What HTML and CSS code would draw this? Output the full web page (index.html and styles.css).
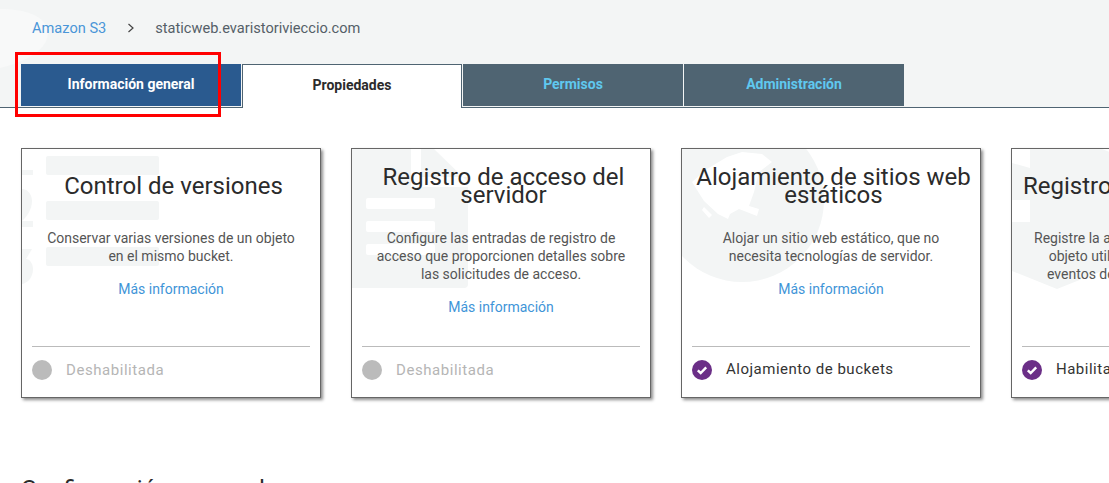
FILE: index.html
```html
<!DOCTYPE html>
<html lang="es">
<head>
  <meta charset="UTF-8" />
  <meta name="viewport" content="width=device-width, initial-scale=1.0" />
  <title>Amazon S3</title>
  <link rel="stylesheet" href="styles.css">
</head>
<body>
  <div class="page">

    <div class="top">
      <svg class="top-swoosh" width="60" height="107" viewBox="0 0 60 107">
        <path d="M0 9 C25 9 46 16 48 31 C49 50 25 62 0 68 Z" fill="#f8f9f9" />
      </svg>

      <div class="breadcrumb">
        <a href="#">Amazon S3</a>
        <svg class="crumb-arrow" width="8" height="10" viewBox="0 0 8 10">
          <path d="M1.5 1 L6 5 L1.5 9" fill="none" stroke="#444" stroke-width="1.2" />
        </svg>
        <span>staticweb.evaristorivieccio.com</span>
      </div>

      <div class="tabs">
        <a class="tab tab-active" href="#">Información general</a>
        <a class="tab tab-current" href="#">Propiedades</a>
        <a class="tab" href="#">Permisos</a>
        <a class="tab" href="#">Administración</a>
      </div>
    </div>

    <div class="red-mark"></div>

    <div class="cards">

      <div class="card">
        <svg class="card-bg" width="300" height="250" viewBox="0 0 300 250">
          <rect x="24" y="7" width="113" height="19" rx="2" />
          <rect x="24" y="52" width="113" height="19" rx="2" />
          <rect x="24" y="98" width="113" height="19" rx="2" />
          <path d="M0 21 H11 V26 H0 Z M0 40 C6 40 10 46 10 52 C10 60 5 68 0 72 H11 V78 H0 Z M0 100 H10 L4 110 C8 110 11 115 11 120 C11 128 6 134 0 135 Z" />
        </svg>
        <h3>Control de versiones</h3>
        <p>Conservar varias versiones de un objeto en el mismo bucket.</p>
        <a class="more" href="#">Más información</a>
        <div class="status status-off">
          <span class="dot"></span>
          <span>Deshabilitada</span>
        </div>
      </div>

      <div class="card">
        <svg class="card-bg" width="300" height="250" viewBox="0 0 300 250">
          <path d="M0 0 H59 V38 H116 V135 Q116 139 112 139 H0 Z" />
          <path d="M69 0 H82 L116 33 V28 H69 Z" />
          <rect x="14" y="49" width="69" height="11" rx="2" fill="#fff" />
          <rect x="14" y="72" width="69" height="11" rx="2" fill="#fff" />
          <rect x="14" y="95" width="69" height="11" rx="2" fill="#fff" />
        </svg>
        <h3>Registro de acceso del servidor</h3>
        <p>Configure las entradas de registro de acceso que proporcionen detalles sobre las solicitudes de acceso.</p>
        <a class="more" href="#">Más información</a>
        <div class="status status-off">
          <span class="dot"></span>
          <span>Deshabilitada</span>
        </div>
      </div>

      <div class="card">
        <svg class="card-bg" width="300" height="250" viewBox="0 0 300 250">
          <circle cx="60" cy="51" r="82" />
          <path d="M60 3 L80 5 L90 13 L77 23 L72 43 L67 57 L77 60 L75 67 L57 60 L48 65 L46 70 L36 65 L22 52 L10 33 L25 20 L45 8 Z M22 58 L30 66 L27 69 L20 61 Z" fill="#fff" />
        </svg>
        <h3>Alojamiento de sitios web estáticos</h3>
        <p>Alojar un sitio web estático, que no necesita tecnologías de servidor.</p>
        <a class="more" href="#">Más información</a>
        <div class="status">
          <svg class="check" width="20" height="20" viewBox="0 0 20 20">
            <circle cx="10" cy="10" r="10" fill="#6b2f87" />
            <path d="M5.8 10.3 L8.7 13 L14.2 7.4" fill="none" stroke="#fff" stroke-width="2.4" />
          </svg>
          <span class="status-text">Alojamiento de buckets</span>
        </div>
      </div>

      <div class="card">
        <svg class="card-bg" width="300" height="250" viewBox="0 0 300 250">
          <path d="M18 0 H90 L140 20 V102 L45 140 L0 122 V73 H18 V51 H0 V14 L18 19 Z" />
        </svg>
        <h3>Registro de nivel de objeto</h3>
        <p>Registre la actividad de la API de nivel de objeto utilizando la característica de eventos de datos de AWS CloudTrail.</p>
        <a class="more" href="#">Más información</a>
        <div class="status">
          <svg class="check" width="20" height="20" viewBox="0 0 20 20">
            <circle cx="10" cy="10" r="10" fill="#6b2f87" />
            <path d="M5.8 10.3 L8.7 13 L14.2 7.4" fill="none" stroke="#fff" stroke-width="2.4" />
          </svg>
          <span class="status-text">Habilitado</span>
        </div>
      </div>

    </div>

    <h2 class="section-title">Configuración avanzada</h2>
  </div>
</body>
</html>
```

FILE: styles.css
```css
* {
  margin: 0;
  padding: 0;
  box-sizing: border-box;
}

html, body {
  height: 100%;
  overflow: hidden;
}

body {
  background: #fff;
  font-family: Roboto, "Liberation Sans", sans-serif;
  color: #333;
}

a {
  text-decoration: none;
}

.page {
  position: relative;
  height: 483px;
  overflow: hidden;
}

.top {
  position: relative;
  height: 108px;
  padding: 20px 0 0 21px;
  background: #f3f5f5;
  border-bottom: 1px solid #4f6472;
}

.top-swoosh {
  position: absolute;
  top: 0;
  left: 0;
}

.breadcrumb {
  position: relative;
  display: flex;
  align-items: center;
  height: 16px;
  margin-left: 11px;
  font-size: 14.6px;
  color: #555f68;
}

.breadcrumb a {
  color: #4a96d8;
}

.crumb-arrow {
  margin: 0 20px 0 21px;
}

.tabs {
  position: relative;
  display: flex;
  gap: 1px;
  margin-top: 28px;
}

.tab {
  display: flex;
  align-items: center;
  justify-content: center;
  width: 220px;
  height: 42px;
  padding-bottom: 2px;
  background: #4f6472;
  color: #5fc8ef;
  font-size: 14px;
  font-weight: 700;
}

.tab-active {
  background: #2a5a8f;
  color: #fff;
}

.tab-current {
  height: 44px;
  padding-bottom: 3px;
  background: #fff;
  color: #2b2b2b;
  border: 1px solid #4f6472;
  border-bottom: none;
}

.red-mark {
  position: absolute;
  top: 52px;
  left: 15px;
  width: 206px;
  height: 65px;
  border: 3px solid #f00;
}

.cards {
  display: flex;
  gap: 30px;
  margin: 40px 0 0 21px;
}

.card {
  position: relative;
  display: flex;
  flex: none;
  flex-direction: column;
  align-items: center;
  width: 300px;
  height: 250px;
  padding: 19px 10px 0;
  background: #fff;
  border: 1px solid #666;
  box-shadow: 2px 2px 3px rgba(0, 0, 0, 0.45);
  text-align: center;
  overflow: hidden;
}

.card-bg {
  position: absolute;
  top: 0;
  left: 0;
  fill: #f3f5f5;
}

.card h3,
.card p,
.card .more {
  position: relative;
}

.card h3 {
  display: flex;
  flex: none;
  align-items: center;
  justify-content: center;
  width: 284px;
  height: 36px;
  margin-left: 5px;
  font-size: 24px;
  font-weight: 400;
  line-height: 18px;
  color: #2b2b2b;
}

.card p {
  width: 262px;
  margin-top: 25px;
  font-size: 14px;
  line-height: 18px;
  color: #555;
}

.more {
  margin-top: 15px;
  font-size: 14px;
  line-height: 18px;
  color: #3f95d8;
}

.status {
  position: absolute;
  top: 197px;
  left: 10px;
  right: 10px;
  display: flex;
  align-items: center;
  gap: 14px;
  height: 47px;
  border-top: 1px solid #bbb;
  font-size: 15px;
  color: #333;
  letter-spacing: 0.5px;
}

.status-text {
  margin-bottom: 3px;
}

.status-off {
  color: #b5b5b5;
  letter-spacing: 0.55px;
}

.dot {
  width: 20px;
  height: 20px;
  border-radius: 50%;
  background: #bbb;
}

.check {
  flex: none;
}

.section-title {
  margin: 77px 0 0 21px;
  font-size: 24px;
  font-weight: 400;
  line-height: 28px;
  color: #2b2b2b;
}
```
